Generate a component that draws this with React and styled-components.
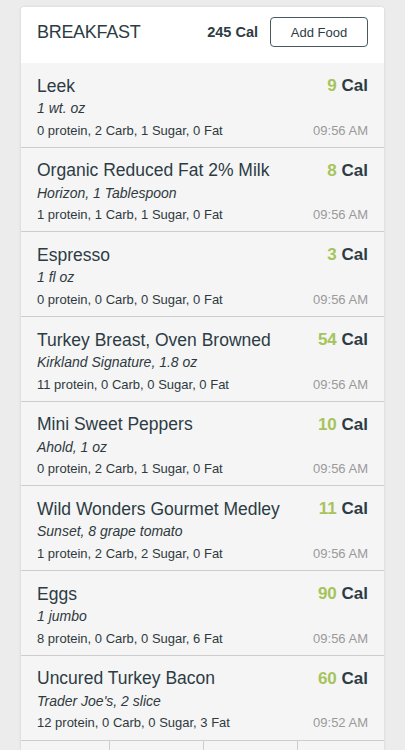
import React from 'react';
import styled, { createGlobalStyle } from 'styled-components';

const GlobalStyle = createGlobalStyle`
  html, body {
    margin: 0;
    padding: 0;
    background: #ececec;
    font-family: "Liberation Sans", Arial, sans-serif;
  }
  * {
    box-sizing: border-box;
  }
`;

const foods = [
  { id: 1, name: 'Leek', serving: '1 wt. oz', cal: 9, macros: '0 protein, 2 Carb, 1 Sugar, 0 Fat', time: '09:56 AM' },
  { id: 2, name: 'Organic Reduced Fat 2% Milk', serving: 'Horizon, 1 Tablespoon', cal: 8, macros: '1 protein, 1 Carb, 1 Sugar, 0 Fat', time: '09:56 AM' },
  { id: 3, name: 'Espresso', serving: '1 fl oz', cal: 3, macros: '0 protein, 0 Carb, 0 Sugar, 0 Fat', time: '09:56 AM' },
  { id: 4, name: 'Turkey Breast, Oven Browned', serving: 'Kirkland Signature, 1.8 oz', cal: 54, macros: '11 protein, 0 Carb, 0 Sugar, 0 Fat', time: '09:56 AM' },
  { id: 5, name: 'Mini Sweet Peppers', serving: 'Ahold, 1 oz', cal: 10, macros: '0 protein, 2 Carb, 1 Sugar, 0 Fat', time: '09:56 AM' },
  { id: 6, name: 'Wild Wonders Gourmet Medley', serving: 'Sunset, 8 grape tomato', cal: 11, macros: '1 protein, 2 Carb, 2 Sugar, 0 Fat', time: '09:56 AM' },
  { id: 7, name: 'Eggs', serving: '1 jumbo', cal: 90, macros: '8 protein, 0 Carb, 0 Sugar, 6 Fat', time: '09:56 AM' },
  { id: 8, name: 'Uncured Turkey Bacon', serving: "Trader Joe's, 2 slice", cal: 60, macros: '12 protein, 0 Carb, 0 Sugar, 3 Fat', time: '09:52 AM' },
];

const Page = styled.div`
  height: 750px;
  overflow: hidden;
  padding: 7px 21px 0;
`;

const Card = styled.div`
  width: 363px;
  background: #f5f5f5;
  border-radius: 3px 3px 0 0;
  box-shadow: 0 0 3px rgba(0, 0, 0, 0.12);
  color: #2d3c44;
`;

const Header = styled.div`
  height: 56px;
  background: #fff;
  display: flex;
  align-items: center;
  padding: 0 16px 6px;
  border-radius: 3px 3px 0 0;
`;

const Title = styled.h1`
  flex: 1;
  margin: 0;
  font-size: 18px;
  font-weight: 400;
  letter-spacing: -0.3px;
  color: #2d3c44;
`;

const Total = styled.span`
  font-size: 14.5px;
  font-weight: 700;
  margin-right: 12px;
`;

const AddButton = styled.button`
  width: 98px;
  height: 30px;
  background: #fff;
  border: 1px solid #4a5960;
  border-radius: 4px;
  font-family: inherit;
  font-size: 13px;
  color: #2d3c44;
`;

const Row = styled.div`
  height: 84.7px;
  padding: 12px 16px 0;
  border-bottom: 1.5px solid #cdcdcd;
`;

const Line = styled.div`
  display: flex;
  justify-content: space-between;
  align-items: center;
  height: 22px;
`;

const Name = styled.span`
  font-size: 17.5px;
`;

const Cal = styled.span`
  font-size: 17px;
  font-weight: 700;
  span {
    color: #a6c35c;
  }
`;

const Serving = styled.span`
  font-size: 14px;
  font-style: italic;
  color: #2f3a40;
`;

const Macros = styled.span`
  font-size: 13px;
  color: #2f3a40;
`;

const Time = styled.span`
  font-size: 13px;
  color: #9a9a9a;
`;

const Footer = styled.div`
  display: grid;
  grid-template-columns: 88px 94px 94px 1fr;
  height: 10px;
  div + div {
    border-left: 1px solid #cdcdcd;
  }
`;

function FoodRow({ food }) {
  return (
    <Row>
      <Line>
        <Name>{food.name}</Name>
        <Cal>
          <span>{food.cal}</span> Cal
        </Cal>
      </Line>
      <Line>
        <Serving>{food.serving}</Serving>
      </Line>
      <Line>
        <Macros>{food.macros}</Macros>
        <Time>{food.time}</Time>
      </Line>
    </Row>
  );
}

export default function App() {
  return (
    <Page>
      <GlobalStyle />
      <Card>
        <Header>
          <Title>BREAKFAST</Title>
          <Total>245 Cal</Total>
          <AddButton>Add Food</AddButton>
        </Header>
        {foods.map((food) => (
          <FoodRow key={food.id} food={food} />
        ))}
        <Footer>
          <div />
          <div />
          <div />
          <div />
        </Footer>
      </Card>
    </Page>
  );
}
